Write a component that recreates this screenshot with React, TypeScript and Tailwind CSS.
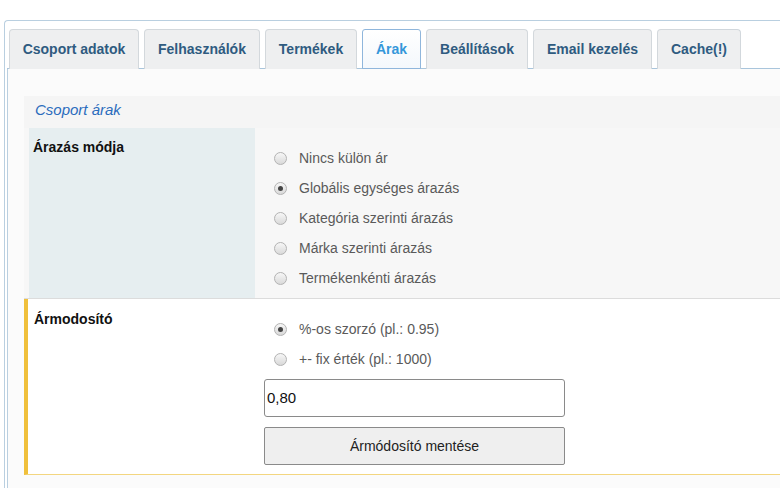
import React from "react";

const tabs = [
  { label: "Csoport adatok", w: "w-[130px]" },
  { label: "Felhasználók", w: "w-[116px]" },
  { label: "Termékek", w: "w-[92px]" },
  { label: "Árak", w: "w-[59px]", active: true },
  { label: "Beállítások", w: "w-[102px]" },
  { label: "Email kezelés", w: "w-[119px]" },
  { label: "Cache(!)", w: "w-[84px]" },
];

function Radio({ checked, label }: { checked?: boolean; label: string }) {
  return (
    <div className="flex h-[30px] items-center">
      <span className="flex h-[13px] w-[13px] items-center justify-center rounded-full border border-[#b3b3b3] bg-gradient-to-b from-[#f7f7f7] to-[#d9d9d9]">
        {checked && <span className="h-[5px] w-[5px] rounded-full bg-[#444]" />}
      </span>
      <span className="ml-[12px] text-[14px] text-[#5a5a5a]">{label}</span>
    </div>
  );
}

export default function App() {
  return (
    <div
      className="h-[488px] w-[780px] overflow-hidden bg-white"
      style={{ fontFamily: '"Liberation Sans", Arial, sans-serif' }}
    >
      <div className="ml-[4px] mt-[20px] w-[800px] rounded-tl-[4px] border-l border-t border-[#b9cfe0] pl-[2px] pt-[8px] h-[480px]">
        <div className="flex gap-[5px] pl-[2px] border-b border-[#a9c5dc] h-[40px]">
          {tabs.map((t) =>
            t.active ? (
              <div
                key={t.label}
                className={`${t.w} flex h-[40px] items-center justify-center rounded-t-[3px] border border-[#8fb6dc] bg-gradient-to-b from-white to-[#f4f8fc] text-[14px] font-bold text-[#3597da]`}
              >
                {t.label}
              </div>
            ) : (
              <div
                key={t.label}
                className={`${t.w} flex h-[40px] items-center justify-center rounded-t-[4px] border border-b-0 border-[#d3d8dc] bg-[#eeeff0] text-[14px] font-bold text-[#2f5b80]`}
              >
                {t.label}
              </div>
            )
          )}
        </div>
        <div className="h-[420px] border-l border-[#b9cfe0] bg-[#fbfbfb] pl-[16px] pt-[27px]">
          <div className="w-[800px]">
            <div className="flex h-[32px] items-center bg-[#f5f5f5] pb-[3px] pl-[11px] text-[15px] italic text-[#2b6cbd]">
              Csoport árak
            </div>
            <div className="flex h-[171px] border-b border-[#dcdcdc] bg-[#f7f7f7] pl-[5px]">
              <div className="w-[226px] bg-[#e6eef0] pl-[4px] pt-[9px] text-[14px] font-bold text-[#111]">
                Árazás módja
              </div>
              <div className="pl-[19px] pt-[15px]">
                <Radio label="Nincs külön ár" />
                <Radio checked label="Globális egységes árazás" />
                <Radio label="Kategória szerinti árazás" />
                <Radio label="Márka szerinti árazás" />
                <Radio label="Termékenkénti árazás" />
              </div>
            </div>
            <div className="flex h-[176px] border-b border-l-[4px] border-b-[#f3d680] border-l-[#f0c03c] bg-white">
              <div className="w-[231px] pl-[6px] pt-[10px] text-[14px] font-bold text-[#111]">
                Ármodosító
              </div>
              <div className="pl-[5px] pt-[15px]">
                <div className="pl-[10px]">
                  <Radio checked label="%-os szorzó (pl.: 0.95)" />
                  <Radio label="+- fix érték (pl.: 1000)" />
                </div>
                <div className="mt-[5px] flex h-[38px] w-[301px] items-center rounded-[3px] border border-[#8a8a8a] bg-white pl-[2px] text-[15px] text-[#111]">
                  0,80
                </div>
                <div className="mt-[10px] flex h-[38px] w-[301px] items-center justify-center rounded-[2px] border border-[#8a8a8a] bg-[#efefef] text-[14px] text-[#222]">
                  Ármódosító mentése
                </div>
              </div>
            </div>
          </div>
        </div>
      </div>
    </div>
  );
}
